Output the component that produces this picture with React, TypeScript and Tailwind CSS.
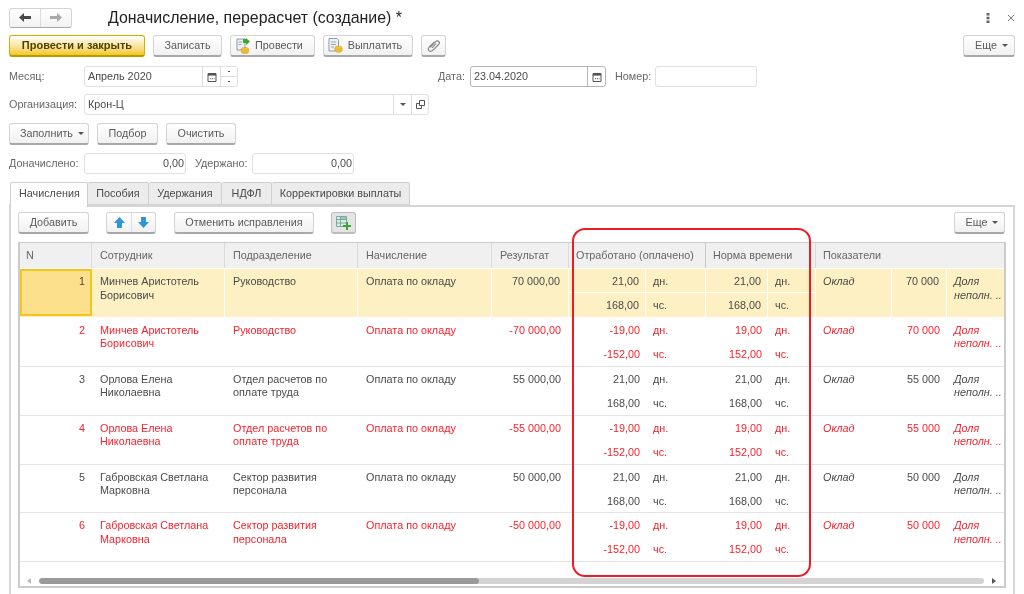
import React from "react";

const Btn = ({ w, children, className = "" }: { w: string; children: React.ReactNode; className?: string }) => (
  <div className={`${w} h-[22px] shrink-0 flex items-center justify-center gap-[5px] rounded-[3px] border border-[#d4d4d4] border-b-[#a8a8a8] border-b-2 bg-gradient-to-b from-white to-[#f1f1f1] text-[#5a5a5a] ${className}`}>
    {children}
  </div>
);

const Caret = () => <span className="inline-block w-0 h-0 border-x-[3px] border-x-transparent border-t-[3px] border-t-[#555]" />;

const Field = ({ w, children, className = "" }: { w: string; children?: React.ReactNode; className?: string }) => (
  <div className={`${w} h-[21px] shrink-0 flex items-stretch rounded-[3px] border border-[#e0e0e0] bg-white text-[#4a4a4a] ${className}`}>
    {children}
  </div>
);

const Cal = () => (
  <svg width="10" height="10" viewBox="0 0 10 10">
    <path d="M1 1.5h8v8H1z" fill="#fff" stroke="#555" />
    <path d="M1 1h8v2.6H1z" fill="#555" />
    <path d="M3 6h1.2v1.2H3zM5 6h1.2v1.2H5zM7 6h.6v1.2H7z" fill="#777" />
  </svg>
);

const Label = ({ w, children }: { w: string; children: React.ReactNode }) => (
  <div className={`${w} shrink-0 text-[#666]`}>{children}</div>
);

type Row = { n: string; name: string[]; dep: string[]; res: string; a: string[]; b: string[]; ok: string; red?: boolean; sel?: boolean };

const rows: Row[] = [
  { n: "1", name: ["Минчев Аристотель", "Борисович"], dep: ["Руководство"], res: "70 000,00", a: ["21,00", "168,00"], b: ["21,00", "168,00"], ok: "70 000", sel: true },
  { n: "2", name: ["Минчев Аристотель", "Борисович"], dep: ["Руководство"], res: "-70 000,00", a: ["-19,00", "-152,00"], b: ["19,00", "152,00"], ok: "70 000", red: true },
  { n: "3", name: ["Орлова Елена", "Николаевна"], dep: ["Отдел расчетов по", "оплате труда"], res: "55 000,00", a: ["21,00", "168,00"], b: ["21,00", "168,00"], ok: "55 000" },
  { n: "4", name: ["Орлова Елена", "Николаевна"], dep: ["Отдел расчетов по", "оплате труда"], res: "-55 000,00", a: ["-19,00", "-152,00"], b: ["19,00", "152,00"], ok: "55 000", red: true },
  { n: "5", name: ["Габровская Светлана", "Марковна"], dep: ["Сектор развития", "персонала"], res: "50 000,00", a: ["21,00", "168,00"], b: ["21,00", "168,00"], ok: "50 000" },
  { n: "6", name: ["Габровская Светлана", "Марковна"], dep: ["Сектор развития", "персонала"], res: "-50 000,00", a: ["-19,00", "-152,00"], b: ["19,00", "152,00"], ok: "50 000", red: true },
];

const Lines = ({ t }: { t: string[] }) => (
  <>
    {t.map((x) => (
      <div key={x} className="leading-[13.5px] whitespace-nowrap">{x}</div>
    ))}
  </>
);

const Pair = ({ vals, valW, unitW, sel }: { vals: string[]; valW: string; unitW: string; sel?: boolean }) => {
  const sepR = sel ? "border-r border-white" : "";
  const sepB = sel ? "border-b border-white" : "";
  return (
    <div className="flex flex-col shrink-0">
      {vals.map((v, i) => (
        <div key={v} className={`flex h-[24px] ${i === 0 ? sepB : ""}`}>
          <div className={`${valW} ${sepR} text-right pr-[6px] pt-[6px] leading-[13.5px]`}>{v}</div>
          <div className={`${unitW} ${sepR} pl-[7px] pt-[6px] leading-[13.5px]`}>{i === 0 ? "дн." : "чс."}</div>
        </div>
      ))}
    </div>
  );
};

const TableRow = ({ r }: { r: Row }) => {
  const sep = r.sel ? "border-r border-white" : "";
  return (
    <div className={`flex h-[48.9px] shrink-0 border-b ${r.sel ? "bg-[#fdf0c3] border-white" : "border-[#e4e4e4]"} ${r.red ? "text-[#f5222d]" : "text-[#4a4a4a]"}`}>
      <div className={`w-[72px] shrink-0 text-right pr-[7px] pt-[6px] leading-[13.5px] ${r.sel ? "bg-[#fde08c] border-2 border-[#f6c41c] !pt-[4px] !pr-[5px] h-[47px]" : ""}`}>{r.n}</div>
      <div className={`w-[133px] shrink-0 pl-[8px] pt-[6px] ${sep}`}><Lines t={r.name} /></div>
      <div className={`w-[133px] shrink-0 pl-[8px] pt-[6px] ${sep}`}><Lines t={r.dep} /></div>
      <div className={`w-[134px] shrink-0 pl-[8px] pt-[6px] leading-[13.5px] ${sep}`}>Оплата по окладу</div>
      <div className={`w-[77px] shrink-0 text-right pr-[8px] pt-[6px] leading-[13.5px] whitespace-nowrap ${sep}`}>{r.res}</div>
      <Pair vals={r.a} valW="w-[77px]" unitW="w-[60px]" sel={r.sel} />
      <Pair vals={r.b} valW="w-[62px]" unitW="w-[48px]" sel={r.sel} />
      <div className={`w-[76px] shrink-0 pl-[7px] pt-[6px] leading-[13.5px] italic ${sep}`}>Оклад</div>
      <div className={`w-[55px] shrink-0 text-right pr-[7px] pt-[6px] leading-[13.5px] ${sep}`}>{r.ok}</div>
      <div className="flex-1 pl-[7px] pt-[6px] italic"><Lines t={["Доля", "неполн. .."]} /></div>
    </div>
  );
};

const Head = ({ w, children }: { w: string; children: React.ReactNode }) => (
  <div className={`${w} shrink-0 pl-[8px] pt-[4px] border-r border-[#dadada] whitespace-nowrap`}>{children}</div>
);

export default function App() {
  return (
    <div className="relative w-[1024px] h-[594px] overflow-hidden bg-white font-['Liberation_Sans',Arial,sans-serif] text-[10.8px] tracking-normal blur-[0.4px]">
      {/* top bar */}
      <div className="flex items-center h-[21px] mt-[7px] ml-[9px] relative">
        <div className="w-[63px] h-[20px] flex rounded-[3px] border border-[#d4d4d4] border-b-[#aaa] bg-gradient-to-b from-white to-[#f2f2f2]">
          <div className="w-[31px] flex items-center justify-center border-r border-[#dcdcdc]">
            <svg width="12" height="9" viewBox="0 0 12 9"><path d="M5 0v3h7v3H5v3L0 4.5z" fill="#4a4a4a" /></svg>
          </div>
          <div className="flex-1 flex items-center justify-center">
            <svg width="12" height="9" viewBox="0 0 12 9"><path d="M7 0v3H0v3h7v3l5-4.5z" fill="#a8a8a8" /></svg>
          </div>
        </div>
        <div className="ml-[36px] text-[15.9px] text-[#222] whitespace-nowrap">Доначисление, перерасчет (создание) *</div>
        <div className="ml-auto mr-[9px] flex items-center gap-[17px]">
          <svg width="4" height="10" viewBox="0 0 4 10"><path d="M.5 0h3v2.4h-3zM.5 3.8h3v2.4h-3zM.5 7.6h3V10h-3z" fill="#666" /></svg>
          <svg width="8" height="8" viewBox="0 0 8 8"><path d="M1 1l6 6M7 1L1 7" stroke="#777" strokeWidth="1" /></svg>
        </div>
      </div>

      {/* command bar */}
      <div className="flex mt-[7px] ml-[9px] gap-[8px] h-[23px]">
        <Btn w="w-[136px]" className="!border-[#d3b000] !border-b-[#b99b00] from-[#ffe714] to-[#f6c800] !text-[#4d4300] font-bold text-[11px]">Провести и закрыть</Btn>
        <Btn w="w-[69px]">Записать</Btn>
        <Btn w="w-[85px]" className="pr-[6px]">
          <svg width="14" height="16" viewBox="0 0 14 16">
            <path d="M1 1h8v11H1z" fill="#eef2f6" stroke="#8d9aa8" />
            <path d="M2.5 4h4M2.5 6.5h3" stroke="#9aa7b5" />
            <path d="M7 1h3V0l4 3.5L10 7V5H7z" fill="#3fa535" />
            <ellipse cx="9" cy="11" rx="3.6" ry="1.6" fill="#f3c53c" stroke="#c59a1e" strokeWidth=".5" />
            <path d="M5.4 11v3c0 .9 1.6 1.6 3.6 1.6s3.6-.7 3.6-1.6v-3" fill="#efbc2e" stroke="#c59a1e" strokeWidth=".5" />
          </svg>
          Провести
        </Btn>
        <Btn w="w-[90px]" className="pr-[6px]">
          <svg width="15" height="15" viewBox="0 0 15 15">
            <path d="M1 .5h8l1.5 1.5v11H1z" fill="#eef2f6" stroke="#8d9aa8" />
            <path d="M3 4h5M3 6.5h5M3 9h3" stroke="#9aa7b5" />
            <ellipse cx="10.5" cy="10" rx="3.6" ry="2" fill="#f3c53c" stroke="#c59a1e" strokeWidth=".5" />
            <path d="M6.9 10v2.5c0 1 1.6 1.8 3.6 1.8s3.6-.8 3.6-1.8V10" fill="#efbc2e" stroke="#c59a1e" strokeWidth=".5" />
          </svg>
          Выплатить
        </Btn>
        <Btn w="w-[25px]">
          <svg width="14" height="14" viewBox="0 0 14 14" fill="none" stroke="#888" strokeWidth="1.2">
            <path d="M3.2 8.3 8.6 2.7c1-1 2.5-1 3.2-.2.8.8.7 2.1-.2 3L6 11.2c-1.3 1.3-3 1.5-4 .5s-.8-2.6.4-3.9l5-5" />
            <path d="M5 8.8 9 4.6" />
          </svg>
        </Btn>
        <Btn w="w-[52px]" className="ml-auto mr-[9px] pl-[5px]">Еще <Caret /></Btn>
      </div>

      {/* month / date / number */}
      <div className="flex items-center mt-[8px] ml-[9px] h-[21px]">
        <Label w="w-[75px]">Месяц:</Label>
        <Field w="w-[154px]">
          <div className="flex-1 pl-[3px] self-center">Апрель 2020</div>
          <div className="w-[18px] border-l border-[#dcdcdc] flex items-center justify-center"><Cal /></div>
          <div className="w-[17px] border-l border-[#dcdcdc] flex flex-col">
            <div className="h-[10px] border-b border-[#dcdcdc] flex items-center justify-center"><span className="w-[2px] h-[1px] bg-[#555]" /></div>
            <div className="flex-1 flex items-center justify-center"><span className="w-[2px] h-[1px] bg-[#555]" /></div>
          </div>
        </Field>
        <div className="ml-[200px] w-[32px] shrink-0 text-[#666]">Дата:</div>
        <Field w="w-[136px]" className="!border-[#b5b5b5]">
          <div className="flex-1 pl-[3px] self-center">23.04.2020</div>
          <div className="w-[18px] border-l border-[#b5b5b5] flex items-center justify-center"><Cal /></div>
        </Field>
        <div className="ml-[9px] w-[40px] shrink-0 text-[#666]">Номер:</div>
        <Field w="w-[102px]" />
      </div>

      {/* organisation */}
      <div className="flex items-center mt-[7px] ml-[9px] h-[21px]">
        <Label w="w-[75px]">Организация:</Label>
        <Field w="w-[345px]">
          <div className="flex-1 pl-[3px] self-center">Крон-Ц</div>
          <div className="w-[18px] border-l border-[#dcdcdc] flex items-center justify-center"><Caret /></div>
          <div className="w-[17px] border-l border-[#dcdcdc] flex items-center justify-center">
            <svg width="9" height="9" viewBox="0 0 9 9" fill="none" stroke="#555"><path d="M3.5.5h5v5h-5zM3.5 3.5h-3v5h5v-3" /></svg>
          </div>
        </Field>
      </div>

      {/* fill buttons */}
      <div className="flex mt-[8px] ml-[9px] gap-[8px] h-[22px]">
        <Btn w="w-[80px]" className="pl-[6px]">Заполнить <Caret /></Btn>
        <Btn w="w-[61px]">Подбор</Btn>
        <Btn w="w-[70px]">Очистить</Btn>
      </div>

      {/* totals */}
      <div className="flex items-center mt-[8px] ml-[9px] h-[21px]">
        <Label w="w-[75px]">Доначислено:</Label>
        <Field w="w-[102px]" className="justify-end pr-[1px]"><div className="self-center">0,00</div></Field>
        <div className="ml-[9px] w-[57px] shrink-0 text-[#666]">Удержано:</div>
        <Field w="w-[102px]" className="justify-end pr-[1px]"><div className="self-center">0,00</div></Field>
      </div>

      {/* tabs */}
      <div className="flex mt-[8px] ml-[10px] h-[23px] relative z-10 text-[#4a4a4a]">
        <div className="w-[78px] h-[25px] bg-white border border-b-0 border-[#cfcfcf] rounded-t-[2px] pl-[8px] pt-[2px]">Начисления</div>
        {[["w-[61px]", "Пособия"], ["w-[73px]", "Удержания"], ["w-[50px]", "НДФЛ"], ["w-[138px]", "Корректировки выплаты"]].map(([w, t]) => (
          <div key={t} className={`${w} bg-[#ececec] border border-l-0 border-[#cfcfcf] rounded-t-[2px] text-center pt-[2px] whitespace-nowrap`}>{t}</div>
        ))}
      </div>

      {/* tab panel */}
      <div className="ml-[9px] w-[1006px] h-[400px] border-2 border-[#d6d6d6] border-b-0 pt-[5px] px-[7px]">
        <div className="flex h-[24px] items-start">
          <Btn w="w-[71px]">Добавить</Btn>
          <div className="ml-[17px] w-[50px] h-[22px] flex rounded-[3px] border border-[#d4d4d4] border-b-2 border-b-[#a8a8a8] bg-gradient-to-b from-white to-[#f1f1f1]">
            <div className="w-[25px] flex items-center justify-center border-r border-[#dcdcdc]">
              <svg width="11" height="11" viewBox="0 0 11 11"><path d="M5.5 0 11 6H8v5H3V6H0z" fill="#2f95dc" /></svg>
            </div>
            <div className="flex-1 flex items-center justify-center">
              <svg width="11" height="11" viewBox="0 0 11 11"><path d="M5.5 11 11 5H8V0H3v5H0z" fill="#2f95dc" /></svg>
            </div>
          </div>
          <Btn w="w-[140px]" className="ml-[18px]">Отменить исправления</Btn>
          <div className="ml-[17px] w-[25px] h-[22px] flex items-center justify-center rounded-[3px] border border-[#bdbdbd] border-b-2 bg-[#e4e4e4]">
            <svg width="15" height="14" viewBox="0 0 15 14">
              <path d="M.5.5h10v10H.5z" fill="#d8ece6" stroke="#7fa89c" />
              <path d="M.5 3.5h10M4.5.5v10M.5 7h10" stroke="#7fa89c" />
              <path d="M5 1h5v2H5z" fill="#9cc7ba" />
              <path d="M10 6v3H7v2h3v3h2v-3h3V9h-3V6z" fill="#3aa535" />
            </svg>
          </div>
          <Btn w="w-[51px]" className="ml-auto mr-[1px] pl-[5px]">Еще <Caret /></Btn>
        </div>

        {/* table */}
        <div className="mt-[6px] w-[988px] h-[346px] border-2 border-t border-[#cbcbcb] flex flex-col text-[#666]">
          <div className="flex h-[25px] shrink-0 bg-[#f0f0f0] border-b border-white box-content">
            <div className="w-[72px] shrink-0 pl-[6px] pt-[4px] border-r border-[#dadada]">N</div>
            <Head w="w-[133px]">Сотрудник</Head>
            <Head w="w-[133px]">Подразделение</Head>
            <Head w="w-[134px]">Начисление</Head>
            <Head w="w-[77px]">Результат</Head>
            <div className="w-[137px] shrink-0 pl-[7px] pt-[4px] border-r border-[#c9c9c9] whitespace-nowrap">Отработано (оплачено)</div>
            <div className="w-[110px] shrink-0 pl-[7px] pt-[4px] border-r border-[#dadada] whitespace-nowrap">Норма времени</div>
            <div className="flex-1 pl-[7px] pt-[4px]">Показатели</div>
          </div>
          {rows.map((r) => <TableRow key={r.n} r={r} />)}
          <div className="mt-[16px] flex items-center h-[6px] pl-[7px] pr-[8px] gap-[6px]">
            <span className="w-0 h-0 border-y-[3px] border-y-transparent border-r-[4px] border-r-[#bbb]" />
            <div className="flex-1 h-[6px] rounded-[3px] bg-[#d4d4d4] ml-[2px] overflow-hidden">
              <div className="w-[440px] h-full rounded-[3px] bg-[#9a9a9a]" />
            </div>
            <span className="w-0 h-0 border-y-[3px] border-y-transparent border-l-[4px] border-l-[#555] ml-[2px]" />
          </div>
        </div>
      </div>

      {/* red highlight */}
      <div className="absolute left-[572px] top-[228px] w-[239px] h-[349px] rounded-[13px] border-2 border-[#ed1c24] z-20" />
    </div>
  );
}
